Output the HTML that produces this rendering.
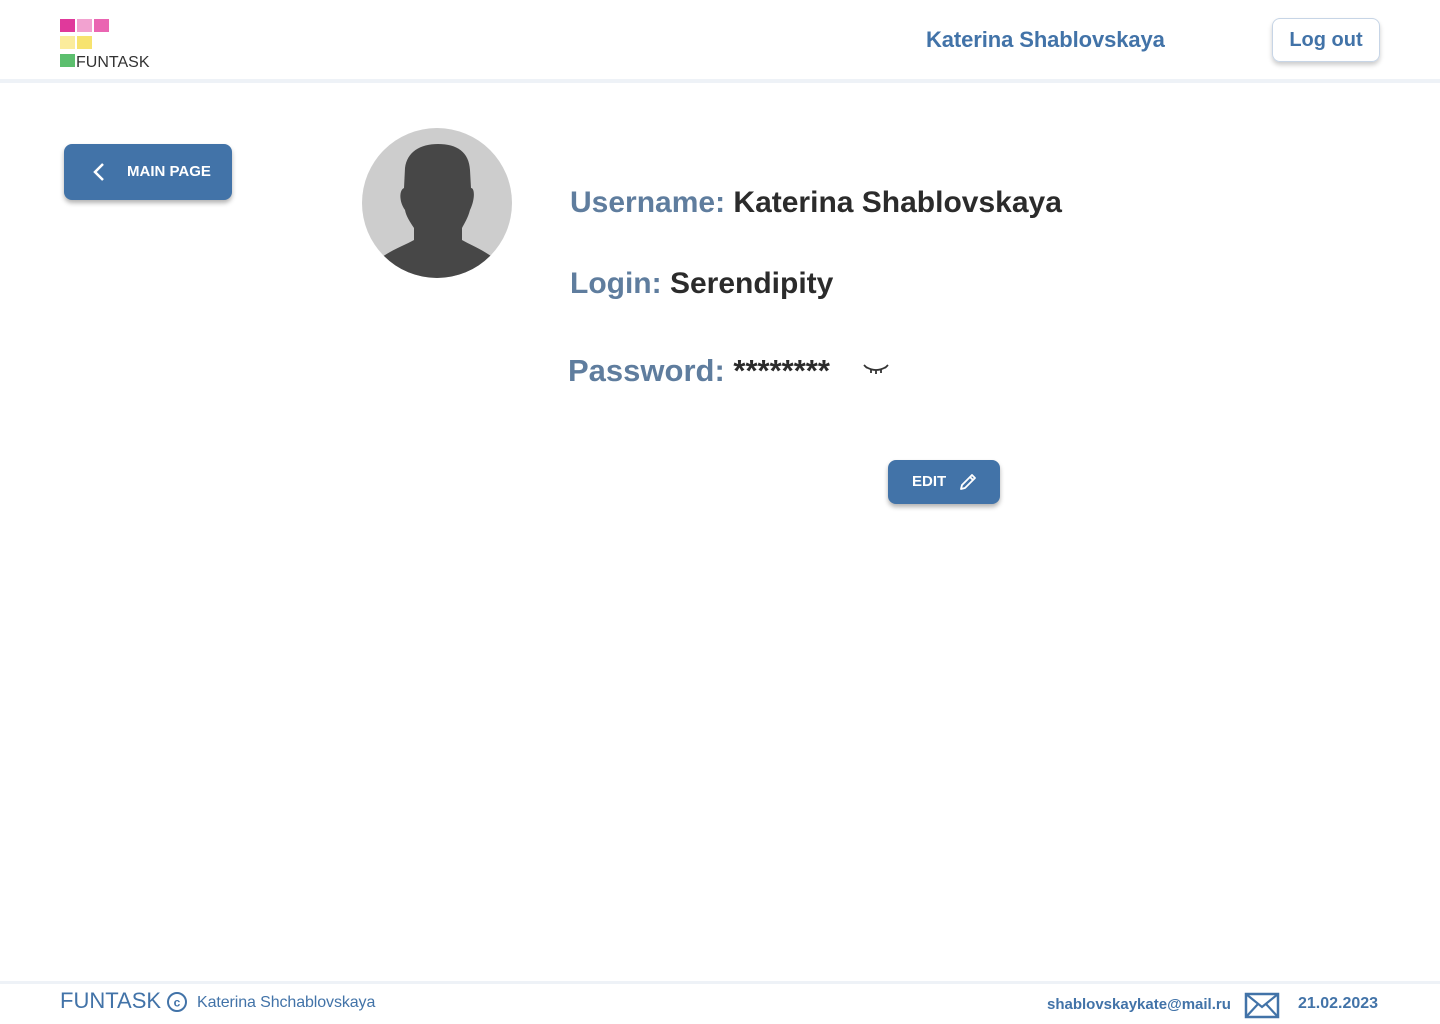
<!DOCTYPE html>
<html><head><meta charset="utf-8"><style>
*{margin:0;padding:0;box-sizing:border-box}
body{width:1440px;height:1024px;background:#fff;font-family:"Liberation Sans",Arial,sans-serif;position:relative;overflow:hidden}
.abs{position:absolute}
.sq{position:absolute;width:15px;height:13px}
.blue{color:#4273a8}
.lbl{color:#5f7d9e;font-weight:bold}
.val{color:#2b2b2b;font-weight:bold}
.btn{position:absolute;background:#4273a8;border-radius:8px;box-shadow:0 3px 5px rgba(0,0,0,.3);color:#fff;font-weight:bold}
</style></head><body>
<div class="abs" style="left:0;top:79px;width:1440px;height:4px;background:#eef2f7"></div>
<div class="sq" style="left:60px;top:19px;background:#e0399b"></div>
<div class="sq" style="left:77px;top:19px;background:#f2a2d0"></div>
<div class="sq" style="left:94px;top:19px;background:#ea65b2"></div>
<div class="sq" style="left:60px;top:36px;background:#fbec9c"></div>
<div class="sq" style="left:77px;top:36px;background:#f7e36f"></div>
<div class="sq" style="left:60px;top:54px;background:#5cbf6e"></div>
<div class="abs" style="left:76px;top:54px;font-size:16px;color:#333">FUNTASK</div>
<div class="abs blue" style="left:926px;top:27px;font-size:22px;font-weight:bold;letter-spacing:-0.1px">Katerina Shablovskaya</div>
<div class="abs blue" style="left:1272px;top:18px;width:108px;height:44px;border:1px solid #c7d5e6;border-radius:8px;box-shadow:0 3px 5px rgba(0,0,0,.2);font-size:20px;font-weight:bold;text-align:center;line-height:42px">Log out</div>
<div class="btn" style="left:64px;top:144px;width:168px;height:56px">
<svg class="abs" style="left:28px;top:18px" width="14" height="20" viewBox="0 0 14 20"><path d="M11 2L3 10l8 8" stroke="#fff" stroke-width="2.5" fill="none"/></svg>
<span class="abs" style="left:63px;top:19px;font-size:15px">MAIN PAGE</span></div>
<svg class="abs" style="left:362px;top:128px" width="150" height="150" viewBox="0 0 150 150">
<circle cx="75" cy="75" r="75" fill="#cdcdcd"/>
<clipPath id="c"><circle cx="75" cy="75" r="75"/></clipPath>
<g clip-path="url(#c)" fill="#474747">
<path d="M43 40C45 24 58 16 76 16C95 16 107 24 108 42L109 60C113 60 113 72 108 82C106 90 102 96 100 100L100 112C110 118 128 124 140 138L140 160H10V138C22 124 42 118 52 112L52 100C48 94 44 88 43 82C37 74 37 62 42 60Z"/></g></svg>
<div class="abs" style="left:570px;top:186px;font-size:30px"><span class="lbl">Username: </span><span class="val">Katerina Shablovskaya</span></div>
<div class="abs" style="left:570px;top:267px;font-size:30px"><span class="lbl">Login: </span><span class="val">Serendipity</span></div>
<div class="abs" style="left:568px;top:353px;font-size:31px"><span class="lbl">Password: </span><span class="val">********</span></div>
<svg class="abs" style="left:863px;top:362px" width="26" height="14" viewBox="0 0 26 14"><path d="M1 3L4 6M25 3L22 6M3 5Q13 11 23 5M8 7.5V11M13 8.5V12M18 7.5V11" stroke="#333" stroke-width="1.8" fill="none"/></svg>
<div class="btn" style="left:888px;top:460px;width:112px;height:44px">
<span class="abs" style="left:24px;top:13px;font-size:15px">EDIT</span>
<svg class="abs" style="left:70px;top:12px" width="20" height="20" viewBox="0 0 20 20"><path d="M3 17L4 13L14 3L17 6L7 16Z M12 5L15 8" stroke="#fff" stroke-width="1.8" fill="none" stroke-linejoin="round"/></svg></div>
<div class="abs" style="left:0;top:981px;width:1440px;height:3px;background:#eef2f7"></div>
<div class="abs blue" style="left:60px;top:988px;font-size:22px">FUNTASK</div>
<svg class="abs" style="left:166px;top:991px" width="22" height="22" viewBox="0 0 22 22"><circle cx="11" cy="11" r="9" stroke="#4273a8" stroke-width="2" fill="none"/><text x="11" y="15.5" text-anchor="middle" font-size="12" font-weight="bold" fill="#4273a8" font-family="Liberation Sans">c</text></svg>
<div class="abs blue" style="left:197px;top:994px;font-size:16px;letter-spacing:-0.1px">Katerina Shchablovskaya</div>
<div class="abs blue" style="left:1047px;top:996px;font-size:15px;font-weight:bold">shablovskaykate@mail.ru</div>
<svg class="abs" style="left:1244px;top:992px" width="36" height="27" viewBox="0 0 36 27"><rect x="2" y="2" width="32" height="23" stroke="#4273a8" stroke-width="2.5" fill="none"/><path d="M2 2L18 15L34 2M2 25L14 12M34 25L22 12" stroke="#4273a8" stroke-width="2.2" fill="none"/></svg>
<div class="abs blue" style="left:1298px;top:995px;font-size:16px;font-weight:bold">21.02.2023</div>
</body></html>
